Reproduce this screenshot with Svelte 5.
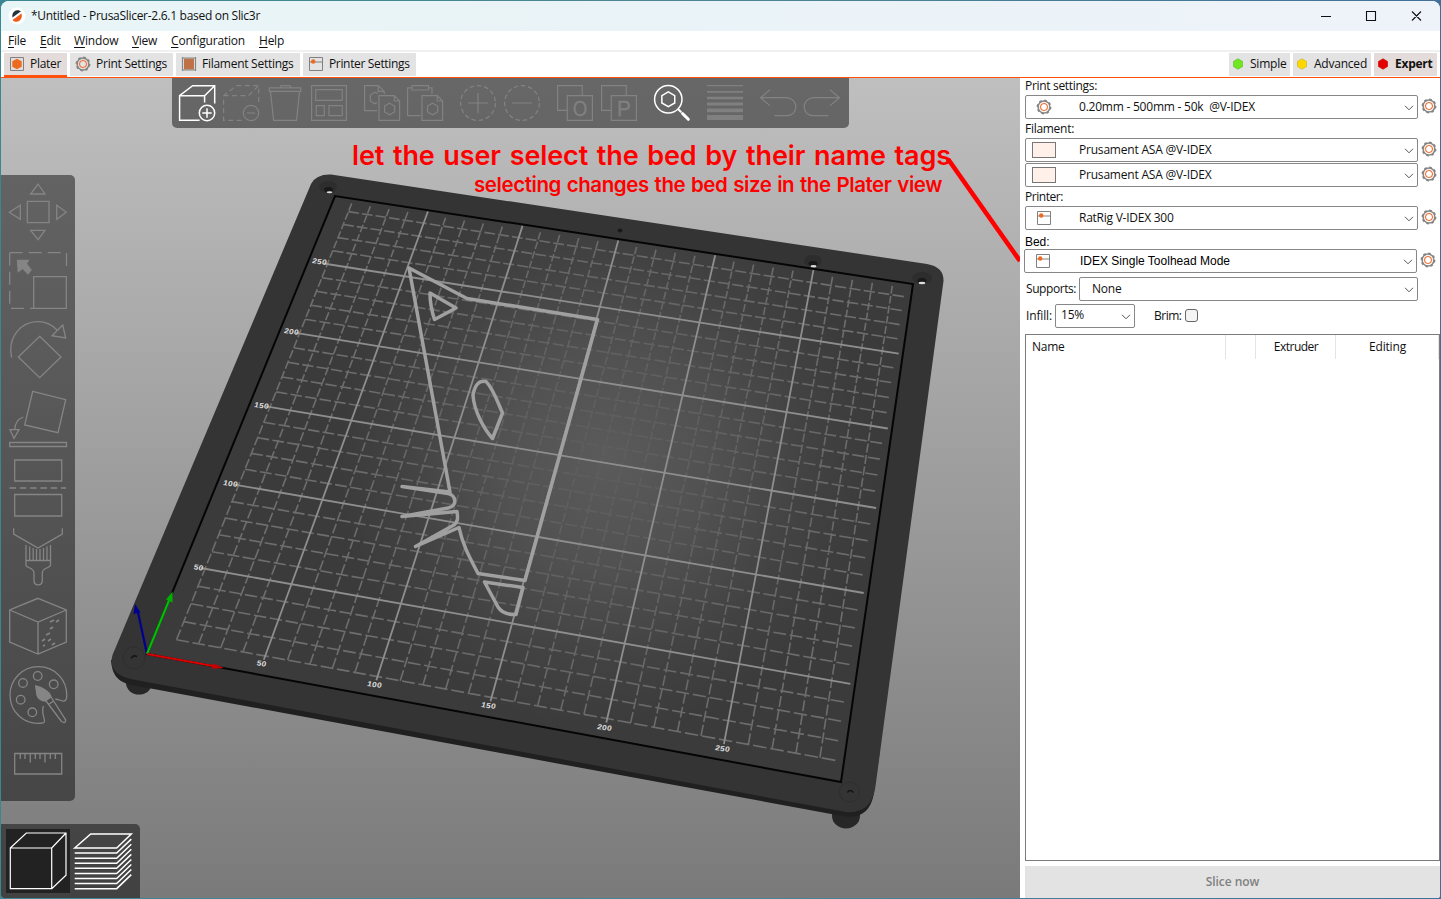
<script>
  // Adjusts tracking so a label takes the width its design gives it.
  function fit(node, width) {
    if (!width) return;
    const natural = node.getBoundingClientRect().width;
    const count = node.textContent.length;
    node.style.letterSpacing = (width - natural) / count + 'px';
  }

  const menus = [
    ['File', 18, 14], ['Edit', 20.5, 13.5], ['Window', 44.5, 13.5], ['View', 25, 14], ['Configuration', 74, 14], ['Help', 25, 0]
  ];
  const tabs = [
    { name: 'Plater', w: 31, box: 63, icon: 'plater', active: true },
    { name: 'Print Settings', w: 71, box: 103, icon: 'gear' },
    { name: 'Filament Settings', w: 91.5, box: 124, icon: 'spool' },
    { name: 'Printer Settings', w: 80.5, box: 113, icon: 'printer' }
  ];
  const modes = [
    { name: 'Simple', w: 36.5, box: 61, color: '#6fe81f', edge: '#5bb52a' },
    { name: 'Advanced', w: 53, box: 78, color: '#ffd800', edge: '#c9ae20' },
    { name: 'Expert', w: 37.5, box: 63, color: '#e70000', edge: '#b80000', active: true }
  ];

  // Bed projection: a 300 x 300 mm plate seen in perspective.
  const corner = [[147, 654], [841, 782], [913, 284], [335, 196]];
  const [p0, p1, p2, p3] = corner;
  const ax = p1[0] - p2[0], ay = p1[1] - p2[1], bx = p3[0] - p2[0], by = p3[1] - p2[1];
  const sx = p0[0] - p1[0] + p2[0] - p3[0], sy = p0[1] - p1[1] + p2[1] - p3[1];
  const den = ax * by - bx * ay;
  const g = (sx * by - bx * sy) / den, h = (ax * sy - sx * ay) / den;
  function project(x, y) {
    const u = x / 300, v = y / 300, w = g * u + h * v + 1;
    const px = ((p1[0] - p0[0] + g * p1[0]) * u + (p3[0] - p0[0] + h * p3[0]) * v + p0[0]) / w;
    const py = ((p1[1] - p0[1] + g * p1[1]) * u + (p3[1] - p0[1] + h * p3[1]) * v + p0[1]) / w;
    return px.toFixed(1) + ' ' + py.toFixed(1);
  }
  let dashed = '', solid = '';
  for (let n = 10; n < 300; n += 10) {
    if (n % 50 === 0) {
      solid += `M${project(n, 8)}L${project(n, 299)}M${project(8, n)}L${project(298, n)}`;
    } else {
      for (let m = 10; m < 297; m += 7.2) {
        const end = Math.min(m + 5.6, 298);
        dashed += `M${project(n, m)}L${project(n, end)}M${project(m, n)}L${project(end, n)}`;
      }
    }
  }
  const ticks = [
    ['50', 261, 666], ['100', 374, 687], ['150', 488, 708], ['200', 604, 730], ['250', 722, 751],
    ['50', 198, 570], ['100', 230, 486], ['150', 261, 408], ['200', 291, 334], ['250', 319, 264]
  ];

  const hex = (x, y, r) => `<path d="M${x} ${y - r}l${r * .87} ${r / 2}v${r}l${-r * .87} ${r / 2}l${-r * .87} ${-r / 2}v${-r}z"/>`;
  const cube = '<path d="M20.6 35.3H.6V10.7L13.6.7H35.7V18.5M.6 10.7H25.6L35.7.7M25.6 10.7V17.5"/>';
  const frontDoc = '<path d="M15 10.7H30.3L35.6 16V35.3H15zM30.3 10.7V16H35.6"/>' + hex(25.6, 24, 5.8);
  const topGroups = [
    [
      ['on', cube + '<circle cx="28" cy="28" r="7.7"/><path d="M28 23.3v9.4M23.3 28h9.4"/>'],
      ['', '<path stroke-dasharray="5 3.4" d="M18.6 35.3H.6V10.7L13.6.7H35.7V19M.6 10.7H25.6L35.7.7"/><circle cx="28" cy="28" r="7.7"/><path d="M24 28h8"/>'],
      ['', '<path d="M2.3 2.9H33.7V6.4H2.3zM13 2.5L14 .6H23L24 2.5M3.5 6.6L6.6 35.3H29.6L32.5 6.6"/>'],
      ['', '<path d="M.6.6H35.4V35.4H.6zM4.7 4.7H31.3V15.3H4.7zM5.3 20.7H13.3V30.7H5.3zM18 20.7H31.3V30.7H18z"/>']
    ],
    [
      ['', '<path d="M13 25.6H.6V.6H14.3L20.3 6.4V9M14.3.6V6.4H20.3M14 8.4L10.8 7.3L6.3 10V16L10.8 18.8L13 17.6"/>' + frontDoc],
      ['', '<path d="M13.5 30.7H.6V2.9H5M21.5 2.9H25V9M5 .6H21.5V5H5z"/>' + frontDoc]
    ],
    [
      ['', '<circle cx="18" cy="18" r="17.4" stroke-dasharray="4.6 2.7"/><path d="M18 8v20M8 18h20"/>'],
      ['', '<circle cx="18" cy="18" r="17.4" stroke-dasharray="4.6 2.7"/><path d="M8 18h20"/>']
    ],
    [
      ['', '<path d="M10 25.4H.6V.6H25.3V10.5M10.3 10.7H35.4V35.3H10.3z"/><text transform="translate(23 31) scale(.85 1)">O</text>'],
      ['', '<path d="M10 25.4H.6V.6H25.3V10.5M10.3 10.7H35.4V35.3H10.3z"/><text transform="translate(23 31) scale(.95 1)">P</text>']
    ],
    [['on', '<circle cx="14.3" cy="14.3" r="13.7"/>' + hex(14.3, 14.3, 7.4) + '<path stroke-width="2" d="M24.3 24.3l3 3"/><path stroke-width="3" stroke-linecap="round" d="M28.5 28.5l5.8 5.8"/>']],
    [['bars', '<path d="M0 0H36V1.2H0zM0 6H36V7.8H0zM0 11.8H36V14.2H0zM0 17.6H36V20.6H0zM0 23.6H36V27.2H0zM0 30H36V35H0z"/>']],
    [
      ['', '<path d="M10 4.8L.5 12.7L10 20.6M.5 12.7H27C39.5 14 38 30.7 27 30.7H14.3"/>'],
      ['', '<path d="M26 4.8L35.5 12.7L26 20.6M35.5 12.7H9C-3.5 14 -2 30.7 9 30.7H24.5"/>']
    ]
  ];

  const gizmos = [
    '<path d="M19.3 19.3H41V40.7H19.3zM22.7 12L30 2L37 12zM22.7 48.3L30 57.7L37 48.3zM1.3 30.3L12.3 23.3V37.3zM58.3 30.3L48.7 23.3V37.3z"/>',
    '<path stroke-dasharray="13 6" d="M1.7 1.7H58.5V20M1.7 1.7V57.3H25"/><path d="M25.7 25.7H58.3V57.3H25.7z"/><path class="solid" d="M9.5 9.5L20.3 9.3L18.3 12.7L23 19L20 22.7L14.7 17.3L10.3 20.5z"/>',
    '<path d="M31.7 16.3L53 37L31.7 57.7L10.3 37zM3.7 37.5C-1 16 14 1.7 29.7 1.7C38 1.7 45 5.5 49.5 10.5M54.7 5L57.7 18L44 15.7z"/>',
    '<path d="M24.7 2.3L57.7 10.7L50 43.7L16.7 36zM15.3 28C10 30 7 34 6.7 40.5M2 40.7H11L6 49.3zM1.7 53.5H58.5V57.5H1.7z"/>',
    '<path d="M6.7 2H53.7V23H6.7zM6.7 36.5H53.7V58H6.7z"/><path stroke-dasharray="6.5 3.8" stroke-width="1.5" d="M1.5 30H58"/>',
    '<path d="M5.7 1.3V7L30 21L54.3 7V1.3M18 18V38C18 41.5 26 40 26 46V53.5C26 59.3 34.3 59.3 34.3 53.5V46C34.3 40 42.5 41.5 42.5 38V18M18 33.5H42.5M21.7 19.5V33M25.2 21V33M28.5 22V33M32 22V33M35.5 21V33M39 19.5V33"/>',
    '<path d="M30 2.3L58.3 14V46L30 58L1.7 46V14zM1.7 14L30 26L58.3 14M30 26V58"/><path stroke-width="1.7" d="M42 26l4-2M48 26l3-2M42 33l3-2M38 39l4-2M34 45l3-2M40 45l3-2M44 49l3-2M35 50l2-1"/>',
    '<path d="M47.3 34C53 34.5 57 39 58.6 33C60 15 47 1.7 30.3 1.7C14 1.7 2 15 2 30C2 47 16 60.5 34.5 58C40 57 32 49 35.5 41"/><circle cx="29.7" cy="11" r="4.3"/><circle cx="15" cy="18" r="4.3"/><circle cx="45.7" cy="19.3" r="4.3"/><circle cx="12.7" cy="34.7" r="4.3"/><circle cx="24.3" cy="47.3" r="4.3"/><path d="M38 36L53.5 56.5C57 59 59 56 56.5 53L43 32M40.5 39.5L45.5 36"/><path class="solid" d="M27.7 21L29 30C30 34 34 36 37.3 36L43 32C42 27 34 22 27.7 21z"/>',
    '<path d="M6.7 19.5H53.7V40H6.7zM12.3 20v5M17 20v5M22.3 20v8.5M27.3 20v5M32 20v5M37 20v8.5M42.3 20v5M47.3 20v5"/>'
  ];
  const layers = Array.from({ length: 8 }, (_, i) => 24.1 + i * 5.08);
  const layerPath = layers.map((y) => `M4.7 ${y}H46.7L61.3 ${y - 14}`).join('');
</script>

{#snippet gear()}
  <svg class="small" viewBox="0 0 16 16"><circle cx="8" cy="8" r="5.9" fill="none" stroke="#858585" stroke-width="1.5" /><circle cx="8" cy="8" r="6.6" fill="none" stroke="#858585" stroke-width="1.7" stroke-dasharray="2.6 2.584" /><path d="M8 4.3l2.6 1.1L11.7 8l-1.1 2.6L8 11.7l-2.6-1.1L4.3 8l1.1-2.6z" fill="none" stroke="#f07a40" stroke-width="1.2" /></svg>
{/snippet}
{#snippet printer()}
  <svg class="small" viewBox="0 0 16 16"><path d="M1.5 1.5h13v13h-13zM1.5 6h13" fill="none" stroke="#808080" /><circle cx="5.2" cy="5.5" r="2.2" fill="#ed6b21" /></svg>
{/snippet}
{#snippet chevron()}
  <svg class="chev" viewBox="0 0 10 6"><path d="M1 .8L5 4.8L9 .8" /></svg>
{/snippet}
{#snippet combo(text, width, kind)}
  <div class="row">
    <div class="combo" class:arial={kind === 'bed'}>
      <span class="mark">
        {#if kind === 'gear'}{@render gear()}{:else if kind === 'swatch'}<i class="swatch"></i>{:else}{@render printer()}{/if}
      </span>
      <span class="value"><span use:fit={width}>{text}</span></span>
      {@render chevron()}
    </div>
    {@render gear()}
  </div>
{/snippet}

<div class="window">
  <header class="title">
    <svg class="logo" viewBox="0 0 18 18"><circle cx="9" cy="9" r="8.5" fill="#fff" /><path d="M4.5 10.5C3.6 6.5 6 3.5 9 3.2C11 3.1 12.5 3.8 13 4.3z" fill="#26333a" /><path d="M13.5 6.5C14.7 10 12.5 14.7 8.5 14.7C6.5 14.7 5.2 13.9 4.6 12.9z" fill="#f25a1c" /></svg>
    <span class="caption" use:fit={229}>*Untitled - PrusaSlicer-2.6.1 based on Slic3r</span>
    <svg class="controls" viewBox="0 0 102 12"><path d="M1 6.5H11M46.5 1.5H55.5V10.5H46.5zM92 1.5L101 10.5M101 1.5L92 10.5" /></svg>
  </header>

  <nav class="menu">
    {#each menus as [name, w, space]}
      <span style:margin-right="{space}px"><span use:fit={w}><u>{name[0]}</u>{name.slice(1)}</span></span>
    {/each}
  </nav>

  <div class="tabs">
    {#each tabs as t}
      <div class="tab" class:active={t.active} style:width="{t.box}px">
        {#if t.icon === 'gear'}{@render gear()}
        {:else if t.icon === 'printer'}{@render printer()}
        {:else if t.icon === 'plater'}<svg class="small" viewBox="0 0 16 16"><path d="M1.5 1.5h13v13h-13z" fill="none" stroke="#808080" /><path d="M8 2.7l4.7 2.6v5.4L8 13.3l-4.7-2.6V5.3z" fill="#ed6b21" /></svg>
        {:else}<svg class="small" viewBox="0 0 16 16"><path d="M3 2.5h10v11H3z" fill="#bf7245" /><path d="M1.5 1v14M14.5 1v14M1 2h14M1 14h14" stroke="#858585" stroke-width="1.2" /></svg>{/if}
        <span use:fit={t.w}>{t.name}</span>
      </div>
    {/each}
    <div class="spring"></div>
    {#each modes as m}
      <div class="tab mode" class:expert={m.active} style:width="{m.box}px">
        <svg viewBox="0 0 12 12"><path d="M6 .8l4.5 2.6v5.2L6 11.2L1.5 8.6V3.4z" fill={m.color} stroke={m.edge} stroke-width=".6" /></svg>
        <span use:fit={m.w}>{m.name}</span>
      </div>
    {/each}
  </div>

  <main>
    <section class="view">
      <svg class="scene" viewBox="1 78 1019 820">
        <defs>
          <radialGradient id="light" gradientUnits="userSpaceOnUse" cx="605" cy="460" r="270">
            <stop offset="0" stop-color="#5b5b5b" /><stop offset=".4" stop-color="#515151" /><stop offset=".75" stop-color="#424242" /><stop offset="1" stop-color="#3b3b3b" />
          </radialGradient>
          <radialGradient id="lines" gradientUnits="userSpaceOnUse" cx="605" cy="470" r="280">
            <stop offset="0" stop-color="#5d5d5d" /><stop offset=".4" stop-color="#606060" /><stop offset="1" stop-color="#6d6d6d" />
          </radialGradient>
        </defs>
        <ellipse cx="139" cy="683" rx="13" ry="11.5" fill="#272727" />
        <ellipse cx="846" cy="816" rx="14" ry="12.5" fill="#272727" />
        <path fill="#202020" d="M111 660C112 674 117 682 132 685L842 816C862 820 872 809 874 792L880 750L200 640z" />
        <path fill="#343434" d="M311 184Q316 174 331 174.500L927 264Q944 267 943.500 281L875.500 786Q872 814 846 812L133 679.500Q107 674 112.500 655z" />
        <g fill="none" stroke="#2e2e2e"><circle cx="134" cy="658" r="11" /><circle cx="849.5" cy="792" r="10" /></g>
        <path fill="none" stroke="#151515" stroke-width="1.6" d="M131 658.5q2-4 6-2M847.5 792.5q2-4 6 0" />
        <g fill="#2d2d2d"><ellipse cx="328" cy="187" rx="9" ry="6" /><ellipse cx="813" cy="261" rx="9" ry="6" /><ellipse cx="922" cy="278" rx="10" ry="6" /></g>
        <g fill="#191919"><ellipse cx="328.5" cy="189.5" rx="4.5" ry="2.5" /><ellipse cx="813" cy="263.5" rx="4.5" ry="2.5" /><ellipse cx="922" cy="280.5" rx="4.5" ry="2.5" /><ellipse cx="620" cy="230.5" rx="2.5" ry="2" /></g>
        <g fill="#dcdcdc"><ellipse cx="329.5" cy="192.3" rx="2.8" ry="1" /><ellipse cx="813.5" cy="266.3" rx="3" ry="1.2" /><ellipse cx="922" cy="283" rx="3.3" ry="1.2" /></g>
        <path fill="url(#light)" stroke="#050505" stroke-width="2" d="M147 654L841 782L913 284L335 196z" />
        <path fill="none" stroke="url(#lines)" stroke-width="1.6" d={dashed} />
        <path fill="none" stroke="#8e8e8e" stroke-width="1.8" d={solid} />
        <g class="tick">
          {#each ticks as [label, x, y]}<text transform="translate({x} {y}) rotate(8) skewX(-5) scale(1.05 .92)">{label}</text>{/each}
        </g>
        <g fill="none" stroke="#a0a0a0" stroke-width="3.5" stroke-linejoin="round" stroke-linecap="round">
          <path d="M402 486.500L450 492L409 268L467 298.500L597.500 319.500L525 580.500L478 573.500C470 558 463 546 459 527.500L415.500 546.500L453 525.500C459 522 457.500 516 457 511.500L402 516.500L448 508C458 506 456 495 448 493.500L402 486.500" />
          <path d="M430 293L456 308L434.500 319.500Q430 306 430 293zM486 381.500C493 388 498 403 502.500 413L492.500 438.500C485 430 474 412 473 395C475 385 479 380 486 381.500zM484.500 582L523 587.500L516 614.500Q503 615 498 607z" />
        </g>
        <g fill="none" stroke-width="2.2">
          <path stroke="#000090" d="M147 654L137.500 610" /><path stroke="#00c000" d="M147 654L170 598" /><path stroke="#dc0000" d="M147 654L216 666.500" />
        </g>
        <path fill="#000090" d="M135 604l-1.500 10l7-1.500z" /><path fill="#00b000" d="M172.500 591.500l-6.500 8l6.500 3z" /><path fill="#c80000" d="M224 668l-12 .8l1.300-5.200z" />
        <path stroke="#ff0000" stroke-width="4.6" d="M948 159L1020 261" />
      </svg>

      <p class="note big"><span use:fit={599}>let the user select the bed by their name tags</span></p>
      <p class="note mid"><span use:fit={468}>selecting changes the bed size in the Plater view</span></p>

      <div class="toolbar top">
        {#each topGroups as group}
          <div class="group">
            {#each group as [kind, art]}<div class="cell"><svg class="icon {kind}" viewBox="0 0 36 36">{@html art}</svg></div>{/each}
          </div>
        {/each}
      </div>
      <div class="toolbar left">
        {#each gizmos as art}<svg class="icon" viewBox="0 0 60 60">{@html art}</svg>{/each}
      </div>
      <div class="toolbar bottom">
        <svg class="picked" viewBox="0 0 64 64"><path d="M4.3 19H45.7V59.7H4.3zL20.3 4H60V46.3L45.7 59.7M45.7 19L60 4" /></svg>
        <svg viewBox="0 0 64 64"><path d="M4.7 19L20.7 5H61.3L46.7 19z" /><path d={layerPath} /></svg>
      </div>
    </section>

    <aside>
      <div class="label l1"><span use:fit={72}>Print settings:</span></div>
      {@render combo('0.20mm - 500mm - 50k\u00a0 @V-IDEX', 176, 'gear')}
      <div class="label"><span use:fit={49}>Filament:</span></div>
      {@render combo('Prusament ASA @V-IDEX', 132.5, 'swatch')}
      <div class="hair"></div>
      {@render combo('Prusament ASA @V-IDEX', 132.5, 'swatch')}
      <div class="label"><span use:fit={38}>Printer:</span></div>
      {@render combo('RatRig V-IDEX 300', 94.5, 'printer')}
      <div class="label arial bedlabel"><span use:fit={24.5}>Bed:</span></div>
      <div class="bed">{@render combo('IDEX Single Toolhead Mode', 150, 'bed')}</div>
      <div class="row supports">
        <span class="lab"><span use:fit={50}>Supports:</span></span>
        <div class="combo"><span class="value"><span use:fit={29.5}>None</span></span>{@render chevron()}</div>
      </div>
      <div class="row infill">
        <span class="lab"><span use:fit={26}>Infill:</span></span>
        <div class="combo"><span class="value"><span use:fit={23}>15%</span></span>{@render chevron()}</div>
        <span class="brim"><span use:fit={27.5}>Brim:</span></span><i class="check"></i>
      </div>
      <div class="list">
        <div class="head">
          <span><span use:fit={32.5}>Name</span></span><span></span><span class="c"><span use:fit={44.5}>Extruder</span></span><span class="c"><span use:fit={37}>Editing</span></span>
        </div>
      </div>
      <div class="slice"><span use:fit={53.5}>Slice now</span></div>
    </aside>
  </main>
</div>

<style>
  :global(body) { background: linear-gradient(90deg, #3b8791, #4b8792 50%, #41719a); overflow: hidden; }
  .window { box-sizing: border-box; width: 1439px; height: 897px; margin: 1px; background: #fff; border-radius: 8px 8px 3px 3px; overflow: hidden; display: flex; flex-direction: column; font: 12px/16px "Open Sans", "Noto Sans", sans-serif; color: #111; white-space: nowrap; }
  .window span > span, .label span, .tab span, .caption, .note span, .slice span { display: inline-block; }
  svg { display: block; flex: none; }
  .title { height: 30px; display: flex; align-items: center; background: linear-gradient(90deg, #e8f5f7, #eaf3f7 50%, #eef3f9); }
  .logo { width: 18px; height: 18px; margin-left: 7px; }
  .caption { margin-left: 5px; }
  .controls { width: 102px; height: 12px; margin: -1px 18px 0 auto; fill: none; stroke: #111; stroke-width: 1.1; }
  .menu { padding-left: 7px; display: flex; align-items: center; border-bottom: 2px solid #f0f0f0; box-sizing: border-box; height: 21px; }
  .menu u { text-underline-offset: 2px; }
  .tabs { height: 26px; box-sizing: border-box; border-bottom: 1px solid #ff500e; display: flex; gap: 3px; padding: 0 3px; }
  .tab { box-sizing: border-box; height: 24px; display: flex; align-items: center; background: #e3e3e3; padding: 0 0 1px 5px; gap: 5px; border-top: 1px solid #fff; }
  .tab.active { background: #e4dcda; border-bottom: 2px solid #ff500e; height: 25px; padding-bottom: 0; }
  .tab.mode { padding-left: 3px; gap: 6px; }
  .tab.mode svg { width: 12px; height: 12px; }
  .tab.expert { background: #e4dcda; font-weight: 700; }
  .small { width: 16px; height: 16px; }
  .spring { flex: 1; }
  main { flex: 1; display: flex; min-height: 0; }
  .view { width: 1019px; position: relative; background: linear-gradient(#bfbfbf, #7a7a7a); overflow: hidden; }
  .scene { width: 1019px; height: 820px; }
  .tick text { font: 700 8px "Liberation Sans", sans-serif; fill: #dedede; text-anchor: middle; letter-spacing: .2px; }
  .note { position: absolute; margin: 0; color: #ff0000; font-family: Inter, sans-serif; font-weight: 600; }
  .big { left: 351px; top: 61px; font-size: 27px; line-height: 33px; word-spacing: 2px; }
  .mid { left: 473px; top: 92px; font-size: 20.5px; line-height: 29px; word-spacing: 1px; }
  .toolbar { position: absolute; background: rgba(0, 0, 0, .46); display: flex; box-sizing: border-box; }
  .top { left: 171px; top: 0; width: 677px; height: 49.5px; border-radius: 0 0 5px 5px; padding-left: 3px; gap: 9.1px; }
  .group { display: flex; }
  .cell { width: 43.9px; padding-top: 7.3px; display: flex; justify-content: center; }
  .top .icon { width: 36px; height: 36px; overflow: visible; }
  .icon { fill: none; stroke: #828282; stroke-width: 1.2; }
  .top .icon.on { stroke: #fff; stroke-width: 1.5; }
  .top .icon.bars { fill: #808080; stroke: none; }
  .icon :global(.solid) { fill: #858585; }
  .icon :global(text) { font: 400 22px "Liberation Sans", sans-serif; text-anchor: middle; fill: #808080; stroke-width: .3; }
  .left { left: 0; top: 97px; width: 74px; height: 626px; border-radius: 0 5px 5px 0; flex-direction: column; align-items: flex-start; gap: 9px; padding: 7px; }
  .left .icon { width: 60px; height: 60px; stroke: #858585; stroke-width: 1.3; }
  .bottom { left: 0; bottom: 0; width: 139px; height: 74px; border-radius: 0 5px 0 0; padding: 5px; }
  .bottom svg { width: 64px; height: 64px; fill: none; stroke: #fff; stroke-width: 1.5; }
  .bottom .picked { background: #222; stroke-width: 1.2; }
  aside { flex: 1; padding-left: 5px; display: flex; flex-direction: column; }
  .label { height: 19px; line-height: 19px; }
  .l1 { height: 17px; line-height: 16px; }
  .row { height: 24px; display: flex; align-items: center; gap: 3px; }
  .row > .small { margin-top: -3px; }
  .combo { box-sizing: border-box; width: 393px; height: 24px; border: 1px solid #878787; border-radius: 2px; display: flex; align-items: center; background: #fff; }
  .mark { width: 36px; display: flex; justify-content: center; }
  .swatch { box-sizing: border-box; width: 24px; height: 16px; border: 1px solid #777; background: #fff0ea; }
  .value { flex: 1; }
  .mark + .value { padding-left: 17px; }
  .arial .mark + .value { padding-left: 19px; }
  .chev { width: 10px; height: 6px; margin: 2px 3px 0 0; fill: none; stroke: #555; stroke-width: 1; }
  .hair { height: 1px; }
  .arial { font-family: "Liberation Sans", sans-serif; color: #000; }
  .bedlabel { line-height: 24px; }
  .bed { margin-left: -1px; }
  .supports { margin-top: 4px; gap: 3px; }
  .lab { padding-left: 1px; }
  .supports .combo { width: 339px; }
  .supports .value { padding-left: 12px; }
  .infill { margin-top: 3px; gap: 3px; }
  .infill .combo { width: 80px; }
  .infill .value { padding: 0 0 2px 5px; }
  .brim { margin-left: 16px; }
  .check { box-sizing: border-box; width: 13px; height: 13px; margin-top: -1px; border: 1px solid #666; border-radius: 3px; background: #f4f4f4; }
  .list { height: 527px; margin-top: 6px; box-sizing: border-box; border: 1px solid #7c7c7c; width: 415px; }
  .head { display: grid; grid-template-columns: 200px 30px 80px 103px; height: 24px; line-height: 24px; }
  .head > span { border-right: 1px solid #e4e4e4; }
  .head > span:first-child { padding-left: 6px; }
  .c { text-align: center; padding-left: 1px; }
  .slice { margin-top: 5px; flex: 1; background: #e3e3e3; color: #808080; font-weight: 600; display: flex; align-items: center; justify-content: center; }
</style>
